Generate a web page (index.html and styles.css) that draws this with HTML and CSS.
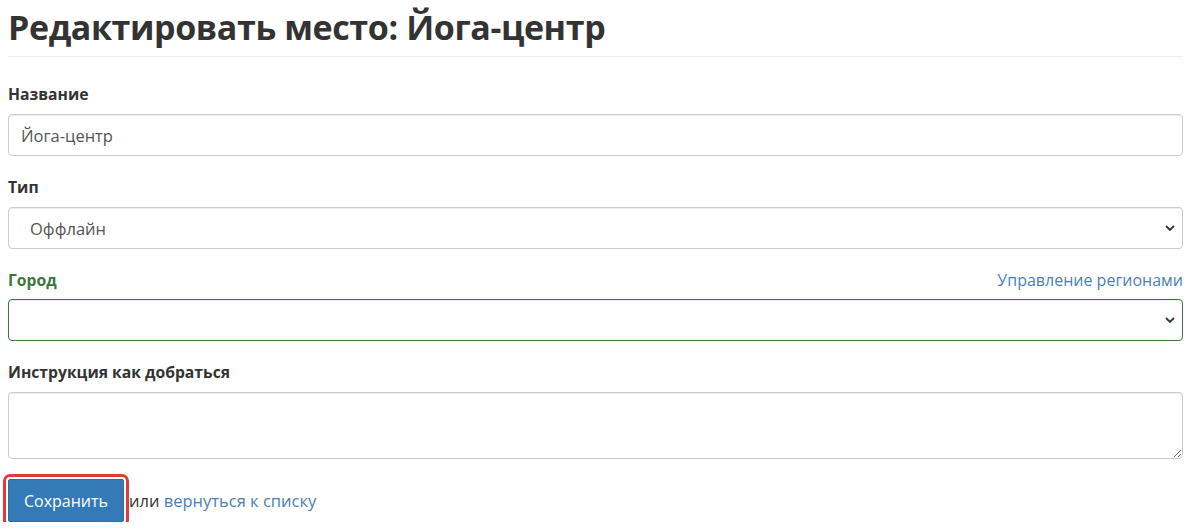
FILE: index.html
```html
<!DOCTYPE html>
<html lang="ru">
<head>
<meta charset="utf-8">
<title>Редактировать место</title>
<link rel="stylesheet" href="styles.css">
</head>
<body>
<div class="page">
  <h1 class="title">Редактировать место: Йога-центр</h1>
  <form class="form">
    <div class="group">
      <label class="label" for="name">Название</label>
      <input class="control" id="name" type="text" value="Йога-центр">
    </div>
    <div class="group">
      <label class="label" for="type">Тип</label>
      <div class="select-wrap">
        <select class="control select" id="type">
          <option>Оффлайн</option>
        </select>
        <svg class="chevron" viewBox="0 0 10 6" width="10" height="6"><path d="M1 1l4 4 4-4" fill="none" stroke="#333" stroke-width="1.8"/></svg>
      </div>
    </div>
    <div class="group group-success">
      <div class="label-row">
        <label class="label" for="city">Город</label>
        <a class="link" href="#">Управление регионами</a>
      </div>
      <div class="select-wrap">
        <select class="control select" id="city">
          <option></option>
        </select>
        <svg class="chevron" viewBox="0 0 10 6" width="10" height="6"><path d="M1 1l4 4 4-4" fill="none" stroke="#333" stroke-width="1.8"/></svg>
      </div>
    </div>
    <div class="group">
      <label class="label" for="how">Инструкция как добраться</label>
      <textarea class="control textarea" id="how"></textarea>
    </div>
    <div class="actions">
      <button class="btn" type="button">Сохранить</button>
      <span class="or">или <a class="link" href="#">вернуться к списку</a></span>
    </div>
  </form>
</div>
</body>
</html>
```
FILE: styles.css
```css
* { box-sizing: border-box; }
html, body { margin: 0; padding: 0; background: #fff; }
body {
  font-family: "Open Sans", "Liberation Sans", sans-serif;
  color: #333;
  font-size: 16px;
}
.page {
  padding: 0 12px 0 8px;
}
.title {
  margin: 0;
  padding: 8px 0 10px;
  font-size: 34px;
  line-height: 38px;
  font-weight: 700;
  color: #333;
  border-bottom: 1px solid #eee;
  letter-spacing: -0.4px;
}
.form { padding-top: 26px; }
.group { margin-bottom: 20px; }
.label {
  display: block;
  font-weight: 700;
  font-size: 15.7px;
  line-height: 22px;
  margin-bottom: 9px;
  color: #333;
}
.label-row {
  display: flex;
  justify-content: space-between;
  align-items: baseline;
  height: 30px;
}
.label-row .link { line-height: 22px; }
.control {
  display: block;
  width: 100%;
  height: 42px;
  padding: 8px 12px;
  font-family: inherit;
  font-size: 16.5px;
  color: #555;
  background: #fff;
  border: 1px solid #ccc;
  border-radius: 4px;
  box-shadow: inset 0 1px 1px rgba(0,0,0,.075);
  outline: none;
}
.select-wrap { position: relative; }
.select {
  appearance: none;
  -webkit-appearance: none;
  padding-left: 21px;
}
.chevron {
  position: absolute;
  right: 8px;
  top: 18px;
  pointer-events: none;
}
.group-success .label { color: #3c763d; }
.group-success .control { border-color: #3c763d; }
.textarea {
  height: 67px;
  resize: vertical;
}
.link {
  color: #4a80b8;
  text-decoration: none;
  font-size: 16px;
}
.actions {
  display: flex;
  align-items: center;
  gap: 5px;
}
.btn {
  font-family: inherit;
  font-size: 16px;
  color: #fff;
  background: #337ab7;
  border: 1px solid #2e6da4;
  border-radius: 2px;
  height: 43px;
  width: 116px;
  padding: 0;
  outline: 3px solid #e0393e;
  outline-offset: 2px;
}
.or { font-size: 16.5px; color: #333; }
.or .link { font-size: 16.5px; }
```
